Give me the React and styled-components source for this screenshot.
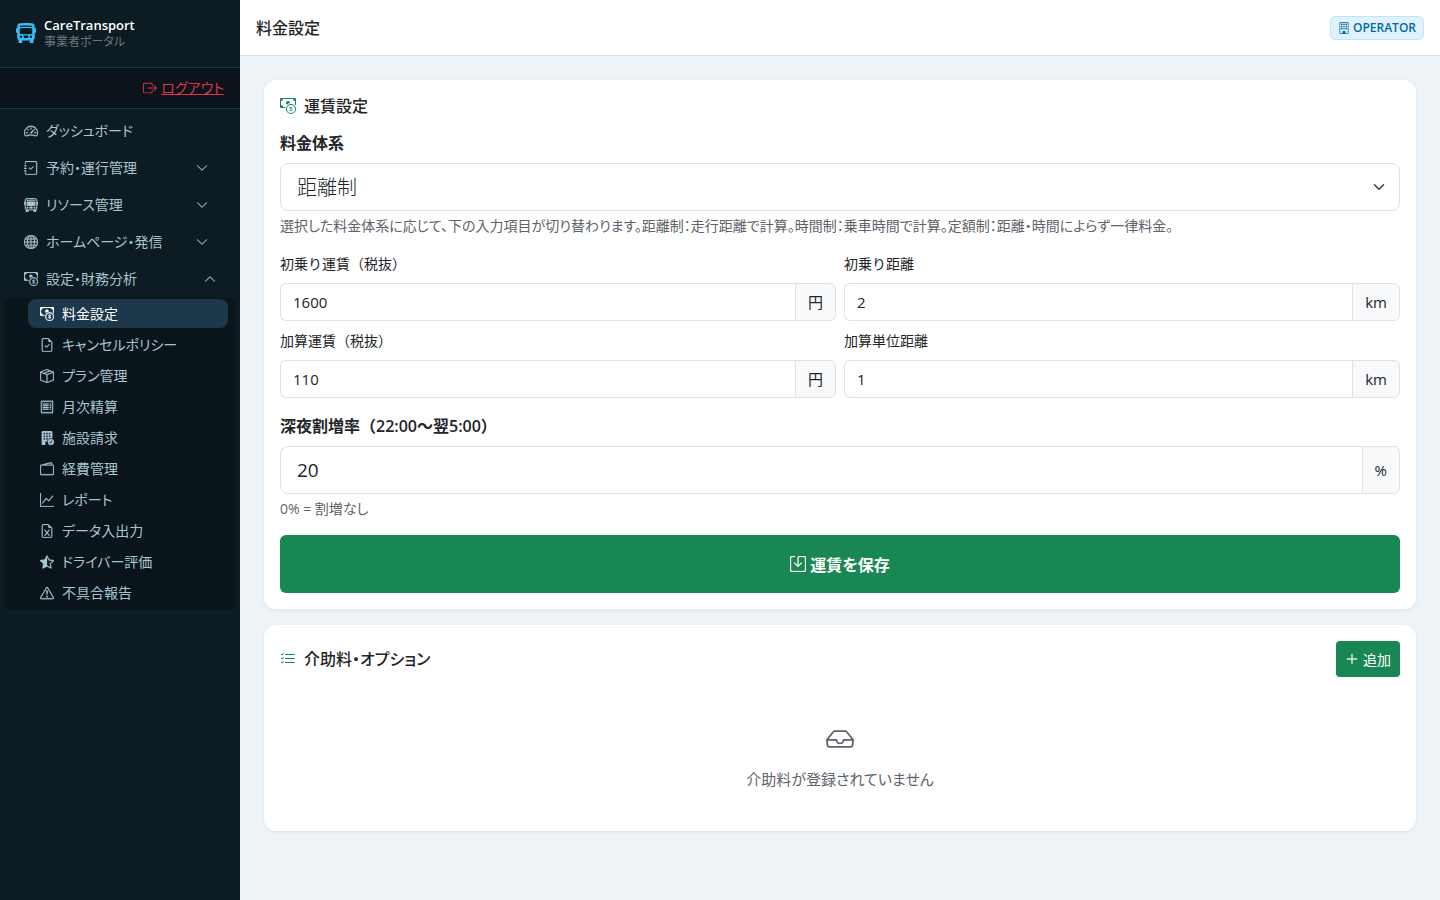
import { useState } from "react"
import styled, { createGlobalStyle } from "styled-components"
import {
    BsBoxArrowRight,
    BsBoxSeam,
    BsBuilding,
    BsBuildingFillCheck,
    BsBusFront,
    BsBusFrontFill,
    BsCashCoin,
    BsChevronDown,
    BsChevronUp,
    BsExclamationTriangle,
    BsFileEarmarkCheck,
    BsFileEarmarkExcel,
    BsGlobe,
    BsGraphUp,
    BsInbox,
    BsJournalCheck,
    BsListCheck,
    BsPlusLg,
    BsReceipt,
    BsSave,
    BsSpeedometer2,
    BsStarHalf,
    BsWallet2,
} from "react-icons/bs"

const groups = [
    { id: "reserve", label: "予約・運行管理", icon: BsJournalCheck },
    { id: "resource", label: "リソース管理", icon: BsBusFront },
    { id: "homepage", label: "ホームページ・発信", icon: BsGlobe },
    {
        id: "finance",
        label: "設定・財務分析",
        icon: BsCashCoin,
        children: [
            { label: "料金設定", icon: BsCashCoin, active: true },
            { label: "キャンセルポリシー", icon: BsFileEarmarkCheck },
            { label: "プラン管理", icon: BsBoxSeam },
            { label: "月次精算", icon: BsReceipt },
            { label: "施設請求", icon: BsBuildingFillCheck },
            { label: "経費管理", icon: BsWallet2 },
            { label: "レポート", icon: BsGraphUp },
            { label: "データ入出力", icon: BsFileEarmarkExcel },
            { label: "ドライバー評価", icon: BsStarHalf },
            { label: "不具合報告", icon: BsExclamationTriangle },
        ],
    },
]

const fareFields = [
    { id: "base_fare", label: "初乗り運賃（税抜）", value: "1600", unit: "円" },
    { id: "base_distance", label: "初乗り距離", value: "2", unit: "km" },
    { id: "add_fare", label: "加算運賃（税抜）", value: "110", unit: "円" },
    { id: "add_distance", label: "加算単位距離", value: "1", unit: "km" },
]

const Sidebar = () => {
    const [open, setOpen] = useState("finance")

    return (
        <Side>
            <Brand>
                <BsBusFrontFill size={20} />
                <div>
                    <BrandName>CareTransport</BrandName>
                    <BrandSub>事業者ポータル</BrandSub>
                </div>
            </Brand>
            <LogoutBar>
                <BsBoxArrowRight size={14} />
                <a href="#logout">ログアウト</a>
            </LogoutBar>
            <nav>
                <NavLink href="#dashboard">
                    <BsSpeedometer2 size={14} />
                    <span>ダッシュボード</span>
                </NavLink>
                {groups.map(({ id, label, icon: Icon, children }) => (
                    <div key={id}>
                        <NavToggle
                            type="button"
                            $open={open === id}
                            aria-expanded={open === id}
                            onClick={() => setOpen(open === id ? "" : id)}
                        >
                            <Icon size={14} />
                            <span>{label}</span>
                            {open === id ? <BsChevronUp size={12} /> : <BsChevronDown size={12} />}
                        </NavToggle>
                        {open === id && children && (
                            <SubMenu>
                                {children.map(({ label, icon: SubIcon, active }) => (
                                    <li key={label}>
                                        <SubLink href="#" $active={active}>
                                            <SubIcon size={14} />
                                            <span>{label}</span>
                                        </SubLink>
                                    </li>
                                ))}
                            </SubMenu>
                        )}
                    </div>
                ))}
            </nav>
        </Side>
    )
}

const UnitField = ({ id, label, value, unit }) => (
    <div>
        <SmallLabel htmlFor={id}>{label}</SmallLabel>
        <InputGroup>
            <Input id={id} defaultValue={value} inputMode="numeric" />
            <Unit>{unit}</Unit>
        </InputGroup>
    </div>
)

const App = () => {
    return (
        <>
            <GlobalStyle />
            <Layout>
                <Sidebar />
                <Main>
                    <TopBar>
                        <h1>料金設定</h1>
                        <RoleBadge>
                            <BsBuilding size={12} />
                            OPERATOR
                        </RoleBadge>
                    </TopBar>
                    <Content>
                        <Card>
                            <CardTitle>
                                <BsCashCoin size={16} />
                                運賃設定
                            </CardTitle>
                            <form onSubmit={(e) => e.preventDefault()}>
                                <Label htmlFor="fare_type">料金体系</Label>
                                <SelectBox>
                                    <Select id="fare_type" defaultValue="distance">
                                        <option value="distance">距離制</option>
                                        <option value="time">時間制</option>
                                        <option value="fixed">定額制</option>
                                    </Select>
                                    <BsChevronDown size={12} />
                                </SelectBox>
                                <Help>
                                    選択した料金体系に応じて、下の入力項目が切り替わります。距離制：走行距離で計算。時間制：乗車時間で計算。定額制：距離・時間によらず一律料金。
                                </Help>
                                <FieldGrid>
                                    {fareFields.map((field) => (
                                        <UnitField key={field.id} {...field} />
                                    ))}
                                </FieldGrid>
                                <Label htmlFor="night_rate">深夜割増率（22:00～翌5:00）</Label>
                                <InputGroup>
                                    <Input id="night_rate" defaultValue="20" inputMode="numeric" $large />
                                    <Unit>%</Unit>
                                </InputGroup>
                                <Help>0% = 割増なし</Help>
                                <SaveButton type="submit">
                                    <BsSave size={16} />
                                    運賃を保存
                                </SaveButton>
                            </form>
                        </Card>
                        <Card>
                            <CardHead>
                                <CardTitle $flush>
                                    <BsListCheck size={16} />
                                    介助料・オプション
                                </CardTitle>
                                <AddButton type="button">
                                    <BsPlusLg size={14} />
                                    追加
                                </AddButton>
                            </CardHead>
                            <Empty>
                                <BsInbox size={28} />
                                <p>介助料が登録されていません</p>
                            </Empty>
                        </Card>
                    </Content>
                </Main>
            </Layout>
        </>
    )
}

const GlobalStyle = createGlobalStyle`
    * {
        box-sizing: border-box;
    }

    body {
        margin: 0;
        font-family: "Open Sans", "Noto Sans CJK JP", sans-serif;
        font-size: 16px;
        line-height: 24px;
        color: #212529;
        background: #eef3f7;
    }

    h1, h2, p, ul {
        margin: 0;
        padding: 0;
    }

    button, input, select {
        font-family: inherit;
        color: inherit;
    }

    svg {
        flex-shrink: 0;
    }
`

const Layout = styled.div`
    display: flex;
    min-height: 100vh;
`

const Side = styled.aside`
    width: 240px;
    flex-shrink: 0;
    background: #0d1b22;
    color: #a8c5d1;
    font-size: 14px;
    font-feature-settings: "palt";

    nav svg {
        stroke-width: 0.3;
    }
`

const Brand = styled.div`
    display: flex;
    align-items: center;
    gap: 8px;
    padding: 16px 16px 18px;
    border-bottom: 1px solid #1e3448;
    color: #38bdf8;
`

const BrandName = styled.div`
    font-size: 13px;
    font-weight: 600;
    line-height: 18px;
    color: #ffffff;
`

const BrandSub = styled.div`
    font-size: 12px;
    line-height: 15px;
    color: #6c757d;
`

const LogoutBar = styled.div`
    display: flex;
    align-items: center;
    justify-content: flex-end;
    gap: 4px;
    padding: 8px 16px;
    background: #0a141a;
    border-bottom: 1px solid #1e3448;
    color: #dc3545;

    a {
        color: inherit;
    }
`

const NavLink = styled.a`
    display: flex;
    align-items: center;
    gap: 8px;
    width: 100%;
    padding: 7px 24px 9px;
    margin-top: 4px;
    line-height: 21px;
    color: inherit;
    text-decoration: none;
`

const NavToggle = styled.button`
    display: flex;
    align-items: center;
    gap: 8px;
    width: 100%;
    padding: 7px ${({ $open }) => ($open ? "24px" : "32px")} 9px 24px;
    border: 0;
    background: none;
    font-size: 14px;
    line-height: 21px;
    text-align: left;
    cursor: pointer;
    font-feature-settings: inherit;

    span {
        flex: 1;
    }
`

const SubMenu = styled.ul`
    display: grid;
    gap: 2px;
    margin: 0 4px;
    padding: 1px 8px 2px 24px;
    list-style: none;
    background: #09151b;
    border-radius: 4px;
`

const SubLink = styled.a`
    display: flex;
    align-items: center;
    gap: 8px;
    padding: 4px 12px;
    border-radius: 8px;
    line-height: 21px;
    text-decoration: none;
    color: ${({ $active }) => ($active ? "#ffffff" : "inherit")};
    background: ${({ $active }) => ($active ? "#1e384b" : "transparent")};
`

const Main = styled.main`
    flex: 1;
    min-width: 0;
`

const TopBar = styled.header`
    display: flex;
    align-items: center;
    justify-content: space-between;
    height: 56px;
    padding: 0 16px;
    background: #ffffff;
    border-bottom: 1px solid #d3e0ea;

    h1 {
        font-size: 16px;
        font-weight: 500;
    }
`

const RoleBadge = styled.span`
    display: flex;
    align-items: center;
    gap: 3px;
    padding: 2px 7px;
    border: 1px solid #bae6fd;
    border-radius: 6px;
    background: #e0f2fe;
    color: #0369a1;
    font-size: 12px;
    font-weight: 600;
    line-height: 18px;
`

const Content = styled.div`
    display: grid;
    gap: 16px;
    padding: 24px;
`

const Card = styled.section`
    padding: 16px;
    border-radius: 12px;
    background: #ffffff;
    box-shadow: 0 1px 4px rgba(0, 0, 0, 0.07);
`

const CardHead = styled.div`
    display: flex;
    align-items: center;
    justify-content: space-between;
`

const CardTitle = styled.h2`
    display: flex;
    align-items: center;
    gap: 8px;
    margin-bottom: ${({ $flush }) => ($flush ? "0" : "15px")};
    font-size: 16px;
    font-weight: 500;
    line-height: 20px;
    font-feature-settings: "palt";

    svg {
        color: #198754;
    }
`

const Label = styled.label`
    display: block;
    margin-bottom: 8px;
    font-weight: 600;
`

const SmallLabel = styled.label`
    display: block;
    margin-bottom: 8px;
    font-size: 14px;
    line-height: 23px;
`

const SelectBox = styled.div`
    display: grid;
    align-items: center;

    select, svg {
        grid-area: 1 / 1;
    }

    svg {
        justify-self: end;
        margin-right: 15px;
        stroke-width: 1;
        pointer-events: none;
    }
`

const Select = styled.select`
    width: 100%;
    height: 48px;
    padding: 0 16px;
    border: 1px solid #dee2e6;
    border-radius: 8px;
    background: #ffffff;
    font-size: 20px;
    font-weight: 300;
    appearance: none;
`

const Help = styled.p`
    margin: 4px 0 16px;
    font-size: 14px;
    line-height: 21px;
    color: #5c636a;
    font-feature-settings: "palt";
`

const FieldGrid = styled.div`
    display: grid;
    grid-template-columns: 1fr 1fr;
    gap: 8px;
    margin-bottom: 16px;
`

const InputGroup = styled.div`
    display: flex;
`

const Input = styled.input`
    flex: 1;
    min-width: 0;
    height: ${({ $large }) => ($large ? "48px" : "38px")};
    padding: 0 ${({ $large }) => ($large ? "16px" : "12px")};
    border: 1px solid #dee2e6;
    border-right: 0;
    border-radius: ${({ $large }) => ($large ? "8px 0 0 8px" : "6px 0 0 6px")};
    background: #ffffff;
    font-size: ${({ $large }) => ($large ? "19px" : "15px")};
`

const Unit = styled.span`
    display: flex;
    align-items: center;
    padding: 0 12px;
    border: 1px solid #dee2e6;
    border-radius: 0 6px 6px 0;
    background: #f8f9fa;
    font-size: 15px;
`

const SaveButton = styled.button`
    display: flex;
    align-items: center;
    justify-content: center;
    gap: 4px;
    width: 100%;
    height: 58px;
    border: 0;
    border-radius: 6px;
    background: #198754;
    color: #ffffff;
    font-size: 16px;
    font-weight: 700;
    font-feature-settings: "palt";
    cursor: pointer;

    svg {
        stroke-width: 0.3;
    }
`

const AddButton = styled.button`
    display: flex;
    align-items: center;
    gap: 4px;
    height: 36px;
    padding: 0 9px;
    border: 0;
    border-radius: 4px;
    background: #198754;
    color: #ffffff;
    font-size: 14px;
    cursor: pointer;

    svg {
        stroke-width: 0.3;
    }
`

const Empty = styled.div`
    display: grid;
    justify-items: center;
    gap: 14px;
    padding: 48px 0 24px;
    color: #5c636a;
    font-size: 15px;
    font-feature-settings: "palt";
`

export default App
